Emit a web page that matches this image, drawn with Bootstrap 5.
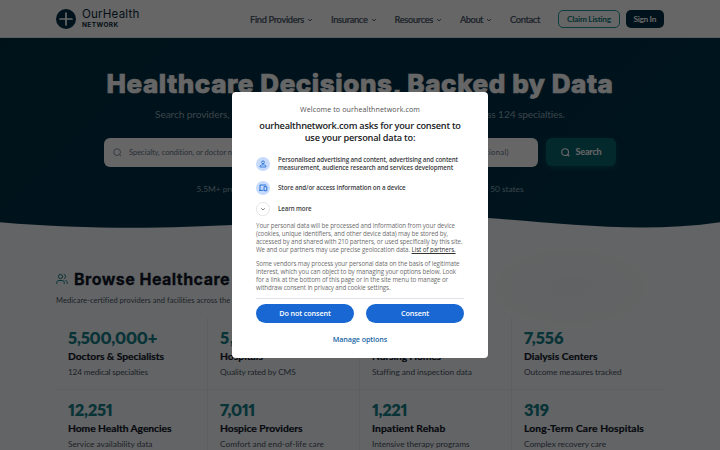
<!DOCTYPE html>
<html lang="en">
<head>
    <meta charset="UTF-8">
    <meta name="viewport" content="width=device-width, initial-scale=1.0">
    <title>OurHealth Network</title>
    <link rel="stylesheet" href="https://cdn.jsdelivr.net/npm/bootstrap@5.3.1/dist/css/bootstrap.min.css">
    <style>
        body {
            font-family: Lato, "Liberation Sans", sans-serif;
            background: #f8fafc;
            color: #0f172a;
            height: 450px;
            overflow: hidden;
            white-space: nowrap;
        }
        .page-wrap { width: 608px; margin: 0 auto; }
        .site-header { height: 38px; background: #fff; border-bottom: 1px solid #e2e8f0; }
        .brand-name { font: 400 11.6px/13px Inter, sans-serif; color: #0c2b40; }
        .brand-sub { font: 700 6.5px/8px Inter, sans-serif; color: #0c2b40; }
        .site-nav { font-size: 9.3px; font-weight: 500; color: #475569; -webkit-text-stroke: .2px #475569; padding-top: 2px; }
        .site-nav svg { margin-left: 3px; }
        .btn-claim, .btn-sign { font-size: 8.3px; font-weight: 700; line-height: 1; padding: 1px 0 0; border-radius: 5px; height: 18px; }
        .btn-claim { width: 62px; border: 1px solid #1a9a9a; color: #0e8080; }
        .btn-sign { width: 38.5px; background: #003049; color: #fff; }

        .hero { height: 190px; background: linear-gradient(135deg, #002d40, #003049 55%, #00344d); color: #fff; position: relative; }
        .hero h1 { font: 800 26px/34px Inter, sans-serif; padding-top: 29px; margin: 0; -webkit-text-stroke: .7px #fff; }
        .hero-lead { font-size: 10.2px; line-height: 14px; color: #91a8b5; margin-top: 6px; }
        .search-row { width: 512px; margin: 17px auto 0; gap: 8px; }
        .search-box { width: 434px; height: 29px; background: #fff; border-radius: 6px; color: #64748b; font-size: 7.6px; padding: 0 29px 0 9px; }
        .btn-find { width: 70px; height: 28px; padding: 0; border-radius: 6px; background: #0b6670; color: #fff; font-size: 9px; font-weight: 700; box-shadow: 0 2px 5px rgba(11, 102, 112, .5); }
        .hero-facts { width: 327px; margin: 15px auto 0; font-size: 8.4px; line-height: 14px; color: #91a8b5; }
        .wave { position: absolute; left: 0; bottom: 0; }

        .browse { padding-top: 39px; }
        .browse h2 { font: 700 16px/24px Inter, sans-serif; -webkit-text-stroke: .3px; }
        .browse-lead { font-size: 7.5px; line-height: 12px; color: #475569; margin-top: 4px; }
        .stat-grid { margin-top: 11px; }
        .stat-cell { height: 72px; padding: 10px 12px 0; border-right: 1px solid #e8edf2; border-bottom: 1px solid #e8edf2; }
        .stat-cell:nth-child(4n) { border-right: 0; }
        .stat-num { font-size: 16.5px; font-weight: 800; line-height: 20px; color: #14808a; font-feature-settings: "pnum"; }
        .stat-name { font-size: 10.3px; font-weight: 700; line-height: 15px; color: #0f172a; padding-top: 1px; -webkit-text-stroke: .2px; }
        .stat-note { font-size: 8.3px; line-height: 12px; color: #475569; margin-top: 2px; }
        .glow { position: absolute; left: 480px; top: 242px; width: 180px; height: 90px; background: radial-gradient(closest-side, rgba(20, 128, 120, .035), transparent); }

        .veil { position: fixed; inset: 0; background: rgba(0, 0, 0, .6); }
        .consent { width: 256px; height: 266px; margin: 92px auto 0; background: #fff; border-radius: 4px; padding: 12px 24px 0; font-family: "Open Sans", "Noto Sans", sans-serif; color: #2c2c2c; }
        .consent-site { font-size: 7.1px; font-weight: 500; line-height: 11px; color: #505050; }
        .consent h2 { font-size: 9.2px; font-weight: 600; line-height: 12px; margin: 5px -8px 11px; color: #202124; }
        .purpose { font-size: 6.2px; font-weight: 600; line-height: 8px; gap: 8px; color: #3c4043; }
        .consent-text { font-size: 6.2px; line-height: 8px; color: #6c6c6c; margin: 0 -4px 6px 0; }
        .consent-text a { color: #333; font-weight: 500; }
        .btn-pill { height: 19px; width: 98px; padding: 0; border-radius: 10px; background: #1967d2; color: #fff; font-size: 7.2px; font-weight: 600; line-height: 1; }
        .manage { color: #1967a8; font-size: 7.2px; font-weight: 600; line-height: 10px; margin-top: 11px; }
    </style>
</head>
<body>

    <header class="site-header">
        <div class="page-wrap d-flex align-items-center h-100">
            <svg width="20" height="20" viewBox="0 0 20 20"><circle cx="10" cy="10" r="10" fill="#003049"/><path d="M10 4v12M4 10h12" stroke="#fff" stroke-width="1.7" stroke-linecap="round"/></svg>
            <div style="margin-left: 6px">
                <div class="brand-name"><span class="fit" data-w="57.5">OurHealth</span></div>
                <div class="brand-sub"><span class="fit" data-w="36.5">NETWORK</span></div>
            </div>
            <nav class="site-nav d-flex align-items-center ms-auto">
                <span style="width: 81px"><span class="fit" data-w="54">Find Providers</span><svg width="6" height="6" viewBox="0 0 6 6"><path d="M1 2l2 2 2-2" fill="none" stroke="#475569" stroke-width=".9"/></svg></span>
                <span style="width: 63.5px"><span class="fit" data-w="36.5">Insurance</span><svg width="6" height="6" viewBox="0 0 6 6"><path d="M1 2l2 2 2-2" fill="none" stroke="#475569" stroke-width=".9"/></svg></span>
                <span style="width: 65.5px"><span class="fit" data-w="38.5">Resources</span><svg width="6" height="6" viewBox="0 0 6 6"><path d="M1 2l2 2 2-2" fill="none" stroke="#475569" stroke-width=".9"/></svg></span>
                <span style="width: 50px"><span class="fit" data-w="23">About</span><svg width="6" height="6" viewBox="0 0 6 6"><path d="M1 2l2 2 2-2" fill="none" stroke="#475569" stroke-width=".9"/></svg></span>
                <span style="width: 48px"><span class="fit" data-w="30">Contact</span></span>
            </nav>
            <button class="btn btn-claim"><span class="fit" data-w="44">Claim Listing</span></button>
            <button class="btn btn-sign" style="margin-left: 5.5px"><span class="fit" data-w="22.5">Sign In</span></button>
        </div>
    </header>

    <section class="hero text-center">
        <h1><span class="fit" data-w="507">Healthcare Decisions, Backed by Data</span></h1>
        <div class="hero-lead"><span class="fit" data-w="410">Search providers, compare quality ratings, and find the right care for you across 124 specialties.</span></div>
        <div class="search-row d-flex">
            <div class="search-box d-flex align-items-center">
                <svg width="9" height="9" viewBox="0 0 24 24" fill="none" stroke="#64748b" stroke-width="2"><circle cx="11" cy="11" r="9"/><path d="M17 17l5 5"/></svg>
                <span style="margin-left: 7px"><span class="fit" data-w="117">Specialty, condition, or doctor name</span></span>
                <span class="ms-auto"><span class="fit" data-w="76">City or ZIP (optional)</span></span>
            </div>
            <button class="btn btn-find d-flex align-items-center justify-content-center">
                <svg width="9" height="9" viewBox="0 0 24 24" fill="none" stroke="#fff" stroke-width="3.2"><circle cx="11" cy="11" r="9"/><path d="M17 17l5 5"/></svg>
                <span style="margin-left: 6px"><span class="fit" data-w="26">Search</span></span>
            </button>
        </div>
        <div class="hero-facts d-flex justify-content-between">
            <span class="fit" data-w="60">5.5M+ providers</span>
            <span>Quality data from CMS</span>
            <span class="fit" data-w="45">All 50 states</span>
        </div>
        <svg class="wave" width="720" height="18" viewBox="0 0 720 18" preserveAspectRatio="none"><path d="M0 12.3C90 20 170 18.5 240 14.6C330 9 400 3 488 8C560 13 640 24 720 12.3V18H0z" fill="#f8fafc"/></svg>
    </section>

    <div class="glow"></div>
    <main class="page-wrap browse">
        <div class="d-flex align-items-center">
            <svg width="12" height="12" viewBox="0 0 24 24" fill="none" stroke="#14808a" stroke-width="2" stroke-linecap="round"><circle cx="9" cy="7" r="4.2"/><path d="M1.5 21v-2a4 4 0 0 1 4-4h7a4 4 0 0 1 4 4v2M16.5 3a4.2 4.2 0 0 1 0 8M22.5 21v-2a4 4 0 0 0-3-3.9"/></svg>
            <h2 class="mb-0" style="margin-left: 6px"><span class="fit" data-w="156">Browse Healthcare</span></h2>
        </div>
        <div class="browse-lead"><span class="fit" data-w="174.5">Medicare-certified providers and facilities across the</span> United States</div>
        <div class="stat-grid row row-cols-4 g-0" id="statGrid"></div>
    </main>

    <div class="veil">
        <div class="consent">
            <div class="consent-site text-center"><span class="fit" data-w="120">Welcome to ourhealthnetwork.com</span></div>
            <h2 class="text-center"><span class="fit" data-w="201.5">ourhealthnetwork.com asks for your consent to</span><br><span class="fit" data-w="110.5">use your personal data to:</span></h2>
            <div class="purpose d-flex align-items-center" style="height: 18px">
                <svg width="14" height="14" viewBox="0 0 14 14"><circle cx="7" cy="7" r="7" fill="#c6dafc"/><circle cx="7" cy="5.3" r="1.4" fill="none" stroke="#1967d2" stroke-width=".8"/><path d="M4.1 10V9.2C4.1 8 6 7.8 7 7.8s2.9.2 2.9 1.4V10z" fill="none" stroke="#1967d2" stroke-width=".8"/></svg>
                <div><span class="fit" data-w="180">Personalised advertising and content, advertising and content</span><br><span class="fit" data-w="175">measurement, audience research and services development</span></div>
            </div>
            <div class="purpose d-flex align-items-center" style="height: 18px; margin-top: 6px">
                <svg width="14" height="14" viewBox="0 0 14 14"><circle cx="7" cy="7" r="7" fill="#c6dafc"/><path d="M10.2 4H4v5M3 9.4h4.2M8 5.7h2.8v4H8z" fill="none" stroke="#1967d2" stroke-width=".9"/></svg>
                <span class="fit" data-w="127.5">Store and/or access information on a device</span>
            </div>
            <div class="purpose d-flex align-items-center" style="height: 18px; margin-top: 3px">
                <svg width="14" height="14" viewBox="0 0 14 14"><circle cx="7" cy="7" r="6.6" fill="#fff" stroke="#dadce0" stroke-width=".7"/><path d="M5.2 6.2L7 8l1.8-1.8" fill="none" stroke="#5f6368" stroke-width=".8"/></svg>
                <span class="fit" data-w="33.5">Learn more</span>
            </div>
            <div class="consent-text" style="margin-top: 4px">
                <span class="fit" data-w="199">Your personal data will be processed and information from your device</span><br>
                <span class="fit" data-w="192">(cookies, unique identifiers, and other device data) may be stored by,</span><br>
                <span class="fit" data-w="206.5">accessed by and shared with 210 partners, or used specifically by this site.</span><br>
                <span class="fit" data-w="154">We and our partners may use precise geolocation data.</span> <a class="fit" data-w="44" href="#">List of partners.</a>
            </div>
            <div class="consent-text">
                <span class="fit" data-w="203.5">Some vendors may process your personal data on the basis of legitimate</span><br>
                <span class="fit" data-w="200">interest, which you can object to by managing your options below. Look</span><br>
                <span class="fit" data-w="192">for a link at the bottom of this page or in the site menu to manage or</span><br>
                <span class="fit" data-w="134.5">withdraw consent in privacy and cookie settings.</span>
            </div>
            <div class="d-flex justify-content-between border-top" style="padding-top: 5px">
                <button class="btn btn-pill"><span class="fit" data-w="51.5">Do not consent</span></button>
                <button class="btn btn-pill"><span class="fit" data-w="28">Consent</span></button>
            </div>
            <div class="manage text-center"><span class="fit" data-w="54.5">Manage options</span></div>
        </div>
    </div>

    <script src="https://cdn.jsdelivr.net/npm/bootstrap@5.3.1/dist/js/bootstrap.bundle.min.js"></script>
    <script>
        // value, name, note and the drawn width of each
        const stats = [
            ['5,500,000+', 89, 'Doctors & Specialists', 96, '124 medical specialties', 80],
            ['5,426', 46, 'Hospitals', 43, 'Quality rated by CMS', 75.5],
            ['14,710', 50, 'Nursing Homes', 69, 'Staffing and inspection data', 99.5],
            ['7,556', 39.5, 'Dialysis Centers', 73.5, 'Outcome measures tracked', 97.5],
            ['12,251', 44.5, 'Home Health Agencies', 103.5, 'Service availability data', 84.5],
            ['7,011', 35, 'Hospice Providers', 82.5, 'Comfort and end-of-life care', 104],
            ['1,221', 35, 'Inpatient Rehab', 73.5, 'Intensive therapy programs', 97.5],
            ['319', 24.5, 'Long-Term Care Hospitals', 120, 'Complex recovery care', 82]
        ];

        document.getElementById('statGrid').innerHTML = stats.map(s => `
            <div class="col stat-cell">
                <div class="stat-num"><span class="fit" data-w="${s[1]}">${s[0]}</span></div>
                <div class="stat-name"><span class="fit" data-w="${s[3]}">${s[2].replace('&', '&amp;')}</span></div>
                <div class="stat-note"><span class="fit" data-w="${s[5]}">${s[4]}</span></div>
            </div>
        `).join('');

        // track each label so that it fills its width
        document.querySelectorAll('.fit').forEach(el => {
            const base = parseFloat(getComputedStyle(el).letterSpacing) || 0;
            const diff = el.dataset.w - el.getBoundingClientRect().width;
            el.style.letterSpacing = (base + diff / el.textContent.length) + 'px';
        });
    </script>
</body>
</html>
